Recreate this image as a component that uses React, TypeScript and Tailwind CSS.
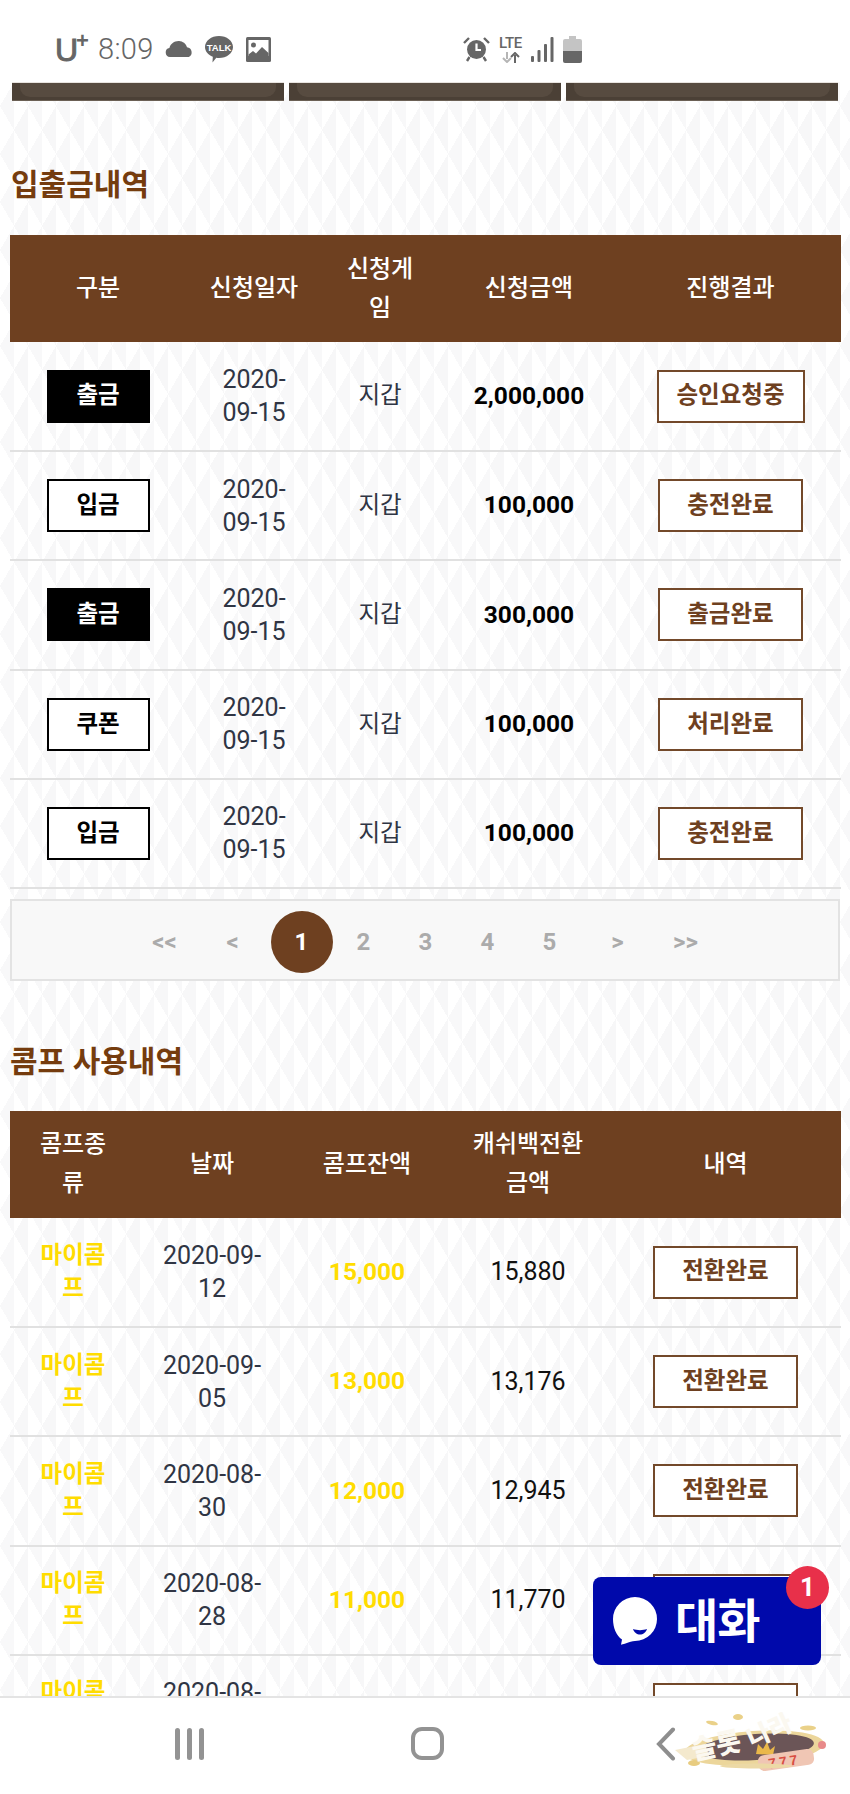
import React from "react";

const ko = "font-['Roboto','Noto_Sans_CJK_KR',sans-serif]";

function Tag({ label, dark }: { label: string; dark?: boolean }) {
  return (
    <span
      className={`inline-flex h-[53px] w-[103px] items-center justify-center border-2 border-black text-[23.5px] font-semibold ${
        dark ? "bg-black text-white" : "bg-white text-black"
      }`}
    >
      {label}
    </span>
  );
}

function Result({ label, w }: { label: string; w: string }) {
  return (
    <span
      className={`inline-flex h-[53px] items-center justify-center border-2 border-[#73492a] bg-white text-[23.5px] font-semibold text-[#6e4020] ${w}`}
    >
      {label}
    </span>
  );
}

function Head({ children }: { children: React.ReactNode }) {
  return <th className="h-[107px] p-0 text-center align-middle text-[24px] leading-[39px] font-medium text-white">{children}</th>;
}

function Cell({ children, className = "" }: { children: React.ReactNode; className?: string }) {
  return <td className={`h-[109.200px] border-b-2 border-[#e1e1e1] p-0 text-center align-middle ${className}`}>{children}</td>;
}

const deposits = [
  { tag: "출금", dark: true, amount: "2,000,000", result: "승인요청중", w: "w-[148px]" },
  { tag: "입금", dark: false, amount: "100,000", result: "충전완료", w: "w-[145px]" },
  { tag: "출금", dark: true, amount: "300,000", result: "출금완료", w: "w-[145px]" },
  { tag: "쿠폰", dark: false, amount: "100,000", result: "처리완료", w: "w-[145px]" },
  { tag: "입금", dark: false, amount: "100,000", result: "충전완료", w: "w-[145px]" },
];

const comps = [
  { d1: "2020-09-", d2: "12", bal: "15,000", cash: "15,880" },
  { d1: "2020-09-", d2: "05", bal: "13,000", cash: "13,176" },
  { d1: "2020-08-", d2: "30", bal: "12,000", cash: "12,945" },
  { d1: "2020-08-", d2: "28", bal: "11,000", cash: "11,770" },
  { d1: "2020-08-", d2: "24", bal: "10,000", cash: "10,800" },
];

function StatusBar() {
  return (
    <div className="flex h-[82px] items-center bg-white pt-[16px] pl-[55px] text-[#666]">
      <span className="relative h-[26px] w-[37px] font-['Liberation_Sans',sans-serif]">
        <span className="absolute top-[-2px] left-0 text-[32px] leading-[32px] font-normal [-webkit-text-stroke:1px_#666]">U</span>
        <span className="absolute top-[-6px] left-[21px] text-[22px] leading-[22px] font-bold">+</span>
      </span>
      <span className="ml-[6px] font-['Roboto',sans-serif] text-[29px] leading-[28px] font-light tracking-[0.3px]">8:09</span>
      <svg className="ml-[11px]" width="30" height="18" viewBox="0 0 30 18">
        <path d="M5 17a4.6 4.6 0 0 1-.6-9.1C5.500 3.600 9.500.8 14 1c3.800.2 7 2.700 8 6.200a5.200 5.200 0 0 1 1.800 9.800z" fill="#666" />
      </svg>
      <svg className="ml-[10px]" width="28" height="27" viewBox="0 0 28 27">
        <path d="M14 0c7.700 0 14 4.800 14 11s-6.300 11-14 11c-.9 0-1.800-.1-2.700-.2L7.500 26.500 7.800 20.700C3.100 18.800 0 15.200 0 11 0 4.800 6.300 0 14 0z" fill="#666" />
        <text x="14" y="14.500" textAnchor="middle" fontSize="9.500" fontWeight="700" fill="#fff" fontFamily="Liberation Sans">TALK</text>
      </svg>
      <svg className="ml-[13px]" width="25" height="25" viewBox="0 0 25 25">
        <rect width="25" height="25" rx="1.500" fill="#666" />
        <rect x="2.500" y="3" width="20" height="16" fill="#fff" />
        <circle cx="7.500" cy="8" r="2.500" fill="#666" />
        <path d="M2.500 19v-1.500L7 14l3 2.500L16 10l6.500 6v3z" fill="#666" />
      </svg>
      <svg className="ml-[192px]" width="27" height="26" viewBox="0 0 27 26">
        <circle cx="13.500" cy="13.500" r="9.500" fill="#666" />
        <path d="M13.500 7.500v6.500h4.500" fill="none" stroke="#fff" strokeWidth="2.200" />
        <path d="M1 7L6 2M26 7L21 2M6.500 21l-2.500 4M20.500 21l2.500 4" stroke="#666" strokeWidth="2.400" fill="none" />
      </svg>
      <span className="ml-[8px] flex w-[26px] flex-col items-center">
        <span className="font-['Roboto',sans-serif] text-[15px] leading-[15px] font-medium tracking-[-0.3px]">LTE</span>
        <svg width="20" height="11" viewBox="0 0 20 11" className="mt-px">
          <path d="M6 0v7M2 6l4 4 4-4" fill="none" stroke="#b5b5b5" strokeWidth="2" />
          <path d="M14 11V3M10 5l4-4 4 4" fill="none" stroke="#666" strokeWidth="2" />
        </svg>
      </span>
      <svg className="ml-[7px]" width="23" height="25" viewBox="0 0 23 25">
        <rect x="0" y="19" width="3" height="6" rx="1" fill="#666" />
        <rect x="6.500" y="13" width="3" height="12" rx="1" fill="#666" />
        <rect x="13" y="7" width="3" height="18" rx="1" fill="#666" />
        <rect x="19.500" y="0" width="3" height="25" rx="1" fill="#666" />
      </svg>
      <svg className="ml-[9px]" width="19" height="27" viewBox="0 0 19 27">
        <path d="M6 0h7v3h4a2 2 0 0 1 2 2v10H0V5a2 2 0 0 1 2-2h4z" fill="#c4c4c4" />
        <path d="M0 15h19v10a2 2 0 0 1-2 2H2a2 2 0 0 1-2-2z" fill="#666" />
      </svg>
    </div>
  );
}

function TopButton() {
  return (
    <div className="h-[19px] border-t border-b border-t-[#e8e4e0] border-b-[#6b6055] bg-[#4b4036]">
      <div className="mx-[8px] h-[14px] rounded-b-[10px] bg-[#574b40]" />
    </div>
  );
}

function Pager() {
  const arrow = "flex h-[62px] w-[62px] items-center justify-center";
  return (
    <div className="mt-[10px] flex h-[82px] items-center justify-center border-2 border-[#e3e3e3] bg-[#f8f8f8] pt-[4px] font-['Roboto',sans-serif] text-[24px] font-bold text-[#ababab]">
      <span className={`${arrow} mr-[6px]`}>&lt;&lt;</span>
      <span className={`${arrow} mr-[7px]`}>&lt;</span>
      <span className={`${arrow} rounded-full bg-[#6e4020] text-white`}>1</span>
      <span className={arrow}>2</span>
      <span className={arrow}>3</span>
      <span className={arrow}>4</span>
      <span className={arrow}>5</span>
      <span className={`${arrow} ml-[6px]`}>&gt;</span>
      <span className={`${arrow} ml-[6px]`}>&gt;&gt;</span>
    </div>
  );
}

function ChatButton() {
  return (
    <div className="absolute top-[1577px] left-[593px] flex h-[88px] w-[228px] items-center rounded-[8px] bg-[#0009ab] pl-[20px]">
      <svg width="44" height="48" viewBox="0 0 44 48">
        <path d="M22 0a22 22 0 0 1 0 44c-3 0-5.500 1-9.500 2.500-2.500.9-3.500 1-4.500 1.300l1-5.300C3.500 38.800 0 31 0 22A22 22 0 0 1 22 0z" fill="#fff" />
        <path d="M20 32c4 1.500 10 1.500 14 0-1 3.500-4 5.500-7 5.500s-6-2-7-5.500z" fill="#0009ab" />
      </svg>
      <span className="ml-[18px] text-[47px] leading-none font-semibold tracking-[-1px] text-white">대화</span>
      <span className="absolute top-[-11px] right-[-8px] flex h-[43px] w-[43px] items-center justify-center rounded-full bg-[#e8304a] font-['Roboto',sans-serif] text-[26px] font-bold text-white">1</span>
    </div>
  );
}

function Logo() {
  return (
    <svg width="160" height="64" viewBox="0 0 160 64">
      <ellipse cx="82" cy="36" rx="70" ry="17" fill="#ecd69b" transform="rotate(-4 82 36)" />
      <ellipse cx="84" cy="35" rx="58" ry="13" fill="#6b5557" transform="rotate(-4 84 35)" />
      <ellipse cx="66" cy="5" rx="5" ry="3" fill="#ead189" />
      <ellipse cx="40" cy="11" rx="6" ry="2" fill="#ead189" transform="rotate(12 40 11)" />
      <ellipse cx="136" cy="16" rx="8" ry="2.500" fill="#ead189" />
      <ellipse cx="22" cy="51" rx="6" ry="3" fill="#e8cc80" />
      <path d="M3 38l30-6 4 12-22 4z" fill="#f4e9cd" />
      <text x="22" y="48" fontSize="27" fontWeight="900" fill="#fbf8f0" transform="rotate(-12 22 48)" fontFamily="Noto Sans CJK KR">슬롯</text>
      <text x="80" y="36" fontSize="25" fontWeight="900" fill="#fbf8f0" transform="rotate(-24 80 36)" fontFamily="Noto Sans CJK KR">나라</text>
      <path d="M84 42l2-10 5 5 4-7 3 8 5-4-2 9z" fill="#eab84a" />
      <rect x="86" y="40" width="56" height="16" rx="6" fill="#f0c6b4" transform="rotate(-8 114 48)" />
      <text x="96" y="54" fontSize="14" fontWeight="700" letterSpacing="3" fill="#d94f42" transform="rotate(-8 114 48)" fontFamily="Liberation Sans">777</text>
      <circle cx="150" cy="33" r="4" fill="#e88a8a" />
      <ellipse cx="84" cy="54" rx="36" ry="2.500" fill="#ecd9a6" />
    </svg>
  );
}

function NavBar() {
  return (
    <div className="absolute top-[1696px] right-0 left-0 h-[98px] border-t-2 border-[#e4e4e4] bg-white">
      <div className="absolute top-[30px] left-[175px] flex h-[32px] w-[29px] justify-between">
        <span className="w-[5px] rounded-full bg-[#939393]" />
        <span className="w-[5px] rounded-full bg-[#939393]" />
        <span className="w-[5px] rounded-full bg-[#939393]" />
      </div>
      <div className="absolute top-[29px] left-[411px] h-[33px] w-[33px] rounded-[11px] border-[4px] border-[#939393]" />
      <svg className="absolute top-[29px] left-[656px]" width="20" height="34" viewBox="0 0 20 34">
        <path d="M17 2.500L3 17l14 14.500" fill="none" stroke="#8e8e8e" strokeWidth="4" strokeLinecap="round" />
      </svg>
      <div className="absolute top-[14px] left-[672px]">
        <Logo />
      </div>
    </div>
  );
}

export default function App() {
  return (
    <div className={`relative h-[1794px] w-[850px] overflow-hidden bg-white ${ko}`}>
      <StatusBar />
      <div className="h-[1712px] bg-[linear-gradient(to_top_right,#ffffff_25%,transparent_25%,transparent_75%,#f7f7f8_75%),linear-gradient(to_top_left,#f7f7f8_25%,transparent_25%,transparent_75%,#ffffff_75%),linear-gradient(to_right,#f8f8f9_50%,#ffffff_50%)] bg-[length:28px_48px] px-[10px]">
        <div className="mx-[2px] grid grid-cols-3 gap-[5px]">
          <TopButton />
          <TopButton />
          <TopButton />
        </div>
        <h2 className="mt-[63px] ml-[1px] h-[71px] text-[30px] leading-[42px] font-bold text-[#753c0e]">입출금내역</h2>
        <table className="w-[831px] table-fixed border-collapse">
          <colgroup>
            <col className="w-[176px]" />
            <col className="w-[136px]" />
            <col className="w-[116px]" />
            <col className="w-[182px]" />
            <col className="w-[221px]" />
          </colgroup>
          <thead className="bg-[#6e4020]">
            <tr>
              <Head>구분</Head>
              <Head>신청일자</Head>
              <Head>
                신청게
                <br />
                임
              </Head>
              <Head>신청금액</Head>
              <Head>진행결과</Head>
            </tr>
          </thead>
          <tbody>
            {deposits.map((r, i) => (
              <tr key={i}>
                <Cell>
                  <Tag label={r.tag} dark={r.dark} />
                </Cell>
                <Cell className="text-[25px] leading-[33px] text-[#2f3544]">
                  2020-
                  <br />
                  09-15
                </Cell>
                <Cell className="text-[23.5px] text-[#2f3544]">지갑</Cell>
                <Cell className="text-[24.500px] font-bold text-black">{r.amount}</Cell>
                <Cell>
                  <Result label={r.result} w={r.w} />
                </Cell>
              </tr>
            ))}
          </tbody>
        </table>
        <Pager />
        <h2 className="mt-[60px] h-[70px] text-[30px] leading-[42px] font-bold text-[#753c0e]">콤프 사용내역</h2>
        <table className="w-[831px] table-fixed border-collapse">
          <colgroup>
            <col className="w-[126px]" />
            <col className="w-[152px]" />
            <col className="w-[158px]" />
            <col className="w-[164px]" />
            <col className="w-[231px]" />
          </colgroup>
          <thead className="bg-[#6e4020]">
            <tr>
              <Head>
                콤프종
                <br />
                류
              </Head>
              <Head>날짜</Head>
              <Head>콤프잔액</Head>
              <Head>
                캐쉬백전환
                <br />
                금액
              </Head>
              <Head>내역</Head>
            </tr>
          </thead>
          <tbody>
            {comps.map((r, i) => (
              <tr key={i}>
                <Cell className="text-[23.5px] leading-[33px] font-semibold text-[#ffdc00]">
                  마이콤
                  <br />프
                </Cell>
                <Cell className="text-[25px] leading-[33px] text-[#2f3544]">
                  {r.d1}
                  <br />
                  {r.d2}
                </Cell>
                <Cell className="text-[24.500px] font-bold text-[#ffdc00]">{r.bal}</Cell>
                <Cell className="text-[25px] text-[#111]">{r.cash}</Cell>
                <Cell>
                  <Result label="전환완료" w="w-[145px]" />
                </Cell>
              </tr>
            ))}
          </tbody>
        </table>
      </div>
      <ChatButton />
      <NavBar />
    </div>
  );
}
